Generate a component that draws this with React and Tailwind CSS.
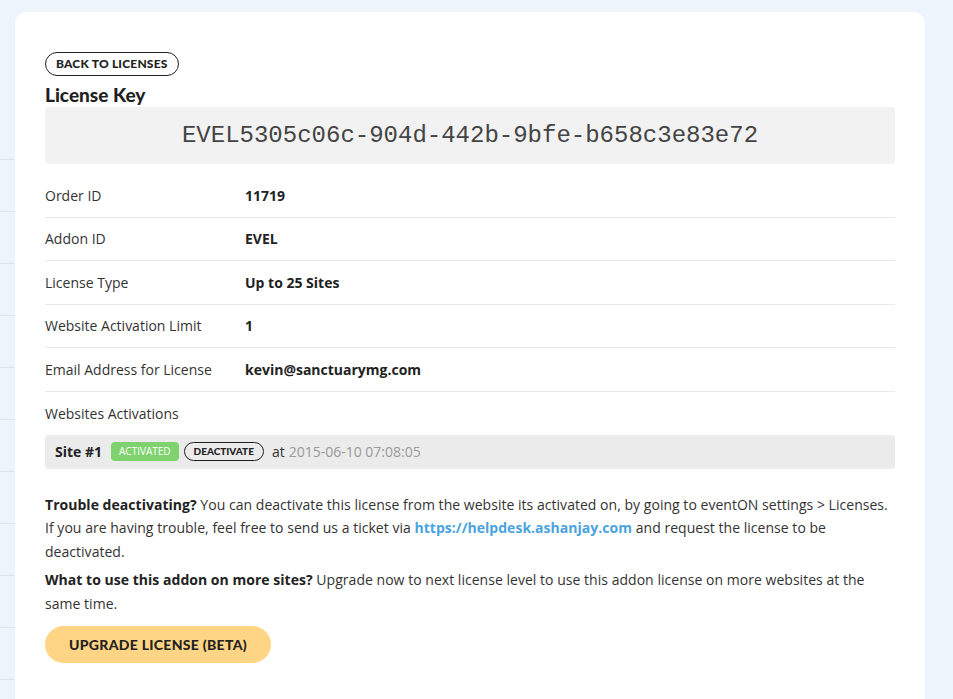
import React from "react";

const rows = [
  ["Order ID", "11719"],
  ["Addon ID", "EVEL"],
  ["License Type", "Up to 25 Sites"],
  ["Website Activation Limit", "1"],
  ["Email Address for License", "kevin@sanctuarymg.com"],
];

const heading = { fontFamily: "Lato, 'Noto Sans', sans-serif" };
const body = { fontFamily: "'Open Sans', 'Noto Sans', sans-serif" };

function SideNav() {
  return (
    <div className="w-[15px] shrink-0 bg-[#edf4fb] pt-[108px]">
      {Array.from({ length: 12 }).map((_, i) => (
        <div key={i} className="h-[52px] border-b border-[#dce4ec]" />
      ))}
    </div>
  );
}

export default function App() {
  return (
    <div className="flex h-[699px] w-[953px] overflow-hidden bg-[#edf4fb] text-[#333]" style={body}>
      <SideNav />
      <div className="pt-[12px]">
        <div className="min-h-[687px] w-[910px] rounded-t-[12px] bg-white px-[30px] pt-[38px] pb-[40px]">
          <button
            className="rounded-full border border-[#222] px-[10px] py-[3px] text-[12px] font-black leading-[16px] tracking-[0.2px] text-[#222]"
            style={heading}
          >
            BACK TO LICENSES
          </button>
          <h2 className="mt-[8px] text-[19px] font-black leading-[22px] text-[#1f1f1f]" style={heading}>
            License Key
          </h2>
          <div className="mt-[1px] flex h-[57px] items-center justify-center rounded-[4px] bg-[#f2f2f2]">
            <span
              className="text-[24px] leading-none text-[#444]"
              style={{ fontFamily: "'Liberation Mono', 'Courier New', monospace" }}
            >
              EVEL5305c06c-904d-442b-9bfe-b658c3e83e72
            </span>
          </div>

          <div className="mt-[10px]">
            {rows.map(([label, value]) => (
              <div key={label} className="flex h-[43.5px] items-center border-b border-[#e8e8e8] text-[14px]">
                <div className="w-[200px] shrink-0">{label}</div>
                <div className="font-bold text-[#222]">{value}</div>
              </div>
            ))}
            <div className="flex h-[43px] items-center text-[14px]">Websites Activations</div>
          </div>

          <div className="flex h-[34px] items-center rounded-[4px] bg-[#ebebeb] px-[10px] text-[14px]">
            <span className="font-bold text-[#222]">Site #1</span>
            <span className="ml-[9px] rounded-[4px] bg-[#7fd36f] px-[8px] py-[2px] text-[10px] leading-[15px] text-white">
              ACTIVATED
            </span>
            <span
              className="ml-[5px] rounded-full border border-[#222] px-[9px] py-[1px] text-[10px] font-black leading-[15px] text-[#222]"
              style={heading}
            >
              DEACTIVATE
            </span>
            <span className="ml-[8px] text-[#333]">at</span>
            <span className="ml-[4px] text-[#999]">2015-06-10 07:08:05</span>
          </div>

          <div className="mt-[24px] text-[14px] leading-[23.5px] tracking-[0.03px]" style={body}>
            <p>
              <b className="text-[#222]">Trouble deactivating?</b> You can deactivate this license from the website its
              activated on, by going to eventON settings &gt; Licenses. If you are having trouble, feel free to send us a
              ticket via{" "}
              <a className="font-bold text-[#4aa3df]" href="#">
                https://helpdesk.ashanjay.com
              </a>{" "}
              and request the license to be deactivated.
            </p>
            <p className="mt-[5px]">
              <b className="text-[#222]">What to use this addon on more sites?</b> Upgrade now to next license level to use
              this addon license on more websites at the same time.
            </p>
          </div>

          <button
            className="mt-[11px] h-[37px] rounded-full bg-[#fed584] px-[24px] text-[14px] font-black tracking-[0.3px] text-[#222]"
            style={heading}
          >
            UPGRADE LICENSE (BETA)
          </button>
        </div>
      </div>
    </div>
  );
}
